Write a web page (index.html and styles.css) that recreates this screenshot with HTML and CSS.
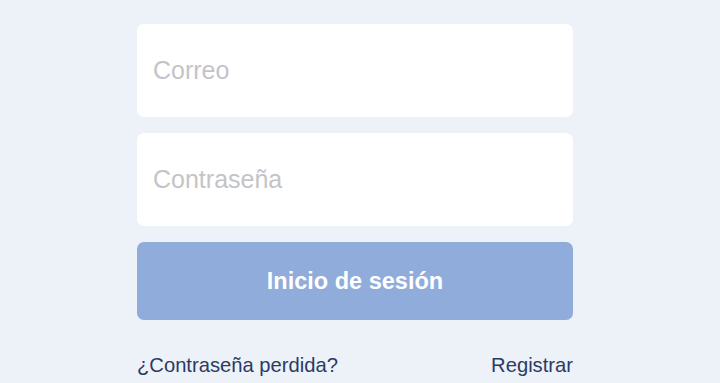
FILE: index.html
```html
<!DOCTYPE html>
<html lang="es">
<head>
<meta charset="utf-8">
<link rel="stylesheet" href="styles.css">
</head>
<body>
<main class="login">
  <form class="form">
    <input class="field" type="email" placeholder="Correo">
    <input class="field" type="password" placeholder="Contraseña">
    <button class="submit" type="button">Inicio de sesión</button>
    <div class="links">
      <a class="link" href="#">¿Contraseña perdida?</a>
      <a class="link" href="#">Registrar</a>
    </div>
  </form>
</main>
</body>
</html>
```

FILE: styles.css
```css
html, body {
  margin: 0;
  padding: 0;
  background: #edf1f8;
  height: 100%;
}
body {
  font-family: "Liberation Sans", Arial, sans-serif;
}
.login {
  display: flex;
  padding: 24px 0 0 137px;
}
.form {
  width: 436px;
  display: flex;
  flex-direction: column;
}
.field {
  box-sizing: border-box;
  height: 93px;
  border: none;
  border-radius: 7px;
  background: #ffffff;
  padding: 0 16px;
  font-family: inherit;
  font-size: 25px;
  color: #333;
  outline: none;
  margin: 0 0 16px 0;
}
.field::placeholder {
  color: #c4c4c8;
}
.submit {
  height: 78px;
  border: none;
  border-radius: 7px;
  background: #8facda;
  color: #ffffff;
  font-family: inherit;
  font-weight: bold;
  font-size: 23.5px;
  margin: 0;
  padding: 0;
}
.links {
  display: flex;
  justify-content: space-between;
  margin-top: 34px;
}
.link {
  color: #2b3a64;
  text-decoration: none;
  font-size: 20.2px;
}
```
